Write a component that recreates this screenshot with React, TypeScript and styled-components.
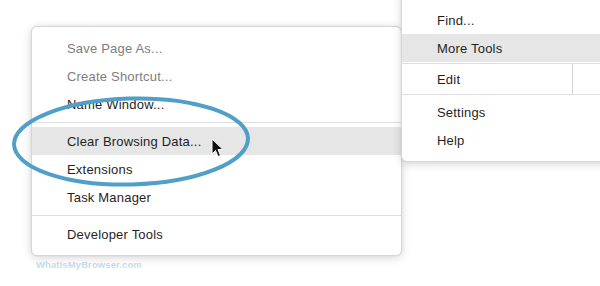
import React from 'react'
import styled, { createGlobalStyle } from 'styled-components'

const GlobalStyle = createGlobalStyle`
  html, body {
    margin: 0;
    padding: 0;
    background: #ffffff;
  }
  body {
    font-family: "Liberation Sans", Arial, sans-serif;
  }
`

const Canvas = styled.div`
  position: relative;
  width: 600px;
  height: 286px;
  overflow: hidden;
  background: #ffffff;
`

const Menu = styled.div<{ top: number; left: number; width: number; z: number }>`
  position: absolute;
  top: ${p => p.top}px;
  left: ${p => p.left}px;
  width: ${p => p.width}px;
  z-index: ${p => p.z};
  box-sizing: border-box;
  display: flex;
  flex-direction: column;
  background: #ffffff;
  border: 1px solid #d6d6d6;
  border-radius: 6px;
  box-shadow: 0 2px 10px rgba(0, 0, 0, 0.16), 0 0 2px rgba(0, 0, 0, 0.08);
`

const Item = styled.div<{ disabled?: boolean; active?: boolean; indent: number }>`
  height: 28px;
  display: flex;
  align-items: center;
  padding-left: ${p => p.indent}px;
  font-size: 13px;
  letter-spacing: 0.2px;
  color: ${p => (p.disabled ? '#7d7d7d' : '#1f1f1f')};
  background: ${p => (p.active ? '#e6e6e6' : 'transparent')};
`

const Separator = styled.div<{ space: number }>`
  height: 1px;
  margin: ${p => p.space}px 0;
  background: #dedede;
`

const EditRow = styled.div`
  display: grid;
  grid-template-columns: 171px 1fr;
  height: 30px;
  border-top: 1px solid #dedede;
  border-bottom: 1px solid #dedede;
`

const EditCell = styled.div`
  display: flex;
  align-items: center;
  padding-left: 35px;
  font-size: 13px;
  letter-spacing: 0.2px;
  color: #1f1f1f;
  border-right: 1px solid #d4d4d4;
`

const Gap = styled.div<{ h: number }>`
  height: ${p => p.h}px;
`

const Overlay = styled.svg<{ top: number; left: number }>`
  position: absolute;
  top: ${p => p.top}px;
  left: ${p => p.left}px;
  z-index: 5;
  pointer-events: none;
  overflow: visible;
`

const Watermark = styled.div`
  position: absolute;
  left: 36px;
  top: 259px;
  font-size: 9.5px;
  font-weight: bold;
  color: #c9ddf0;
  letter-spacing: 0.1px;
`

export default function App() {
  return (
    <Canvas>
      <GlobalStyle />
      <Menu top={26} left={31} width={371} z={1}>
        <Gap h={7} />
        <Item indent={35} disabled>Save Page As...</Item>
        <Item indent={35} disabled>Create Shortcut...</Item>
        <Item indent={35}>Name Window...</Item>
        <Separator space={4} />
        <Item indent={35} active>Clear Browsing Data...</Item>
        <Item indent={35}>Extensions</Item>
        <Item indent={35}>Task Manager</Item>
        <Separator space={4} />
        <Item indent={35}>Developer Tools</Item>
        <Gap h={7} />
      </Menu>

      <Menu top={-10} left={401} width={230} z={2}>
        <Gap h={15} />
        <Item indent={35}>Find...</Item>
        <Item indent={35} active>More Tools</Item>
        <Gap h={1} />
        <EditRow>
          <EditCell>Edit</EditCell>
          <div />
        </EditRow>
        <Gap h={3} />
        <Item indent={35}>Settings</Item>
        <Item indent={35}>Help</Item>
        <Gap h={7} />
      </Menu>

      <Overlay top={0} left={0} width={600} height={286} viewBox="0 0 600 286">
        <ellipse
          cx={131}
          cy={141.5}
          rx={117}
          ry={43}
          fill="none"
          stroke="#4f9fc8"
          strokeWidth={4}
          transform="rotate(-1.5 131 141.5)"
        />
        <path
          d="M212 139 L212 154 L215.5 150.5 L218 156.5 L220.5 155.5 L218 149.5 L223 149.5 Z"
          fill="#111"
          stroke="#fff"
          strokeWidth={1}
          strokeLinejoin="round"
        />
      </Overlay>

      <Watermark>WhatIsMyBrowser.com</Watermark>
    </Canvas>
  )
}
